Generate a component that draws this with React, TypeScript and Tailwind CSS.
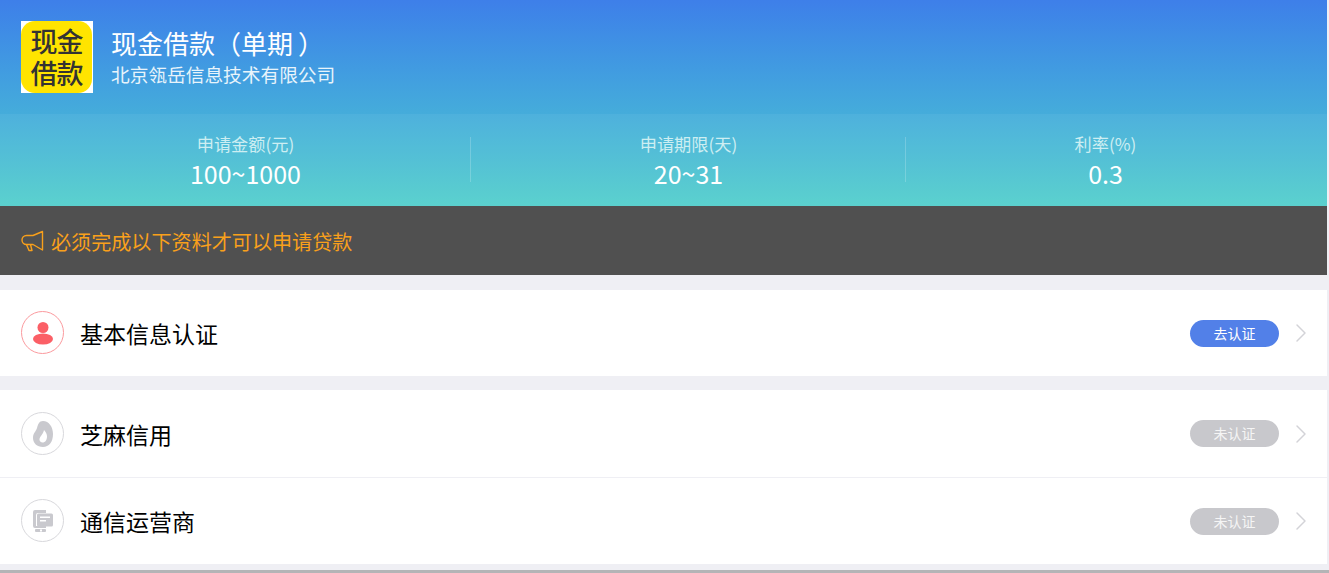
import { ChevronRight } from "lucide-react";

const font = { fontFamily: '"Noto Sans CJK SC", "Noto Sans", sans-serif' };

const stats = [
  { label: "申请金额(元)", value: "100~1000", pad: "pl-[20px]" },
  { label: "申请期限(天)", value: "20~31", pad: "" },
  { label: "利率(%)", value: "0.3", pad: "pr-[22px]" },
];

const UserIcon = () => (
  <svg width="22" height="24" viewBox="0 0 22 24">
    <circle cx="11" cy="6.500" r="5.500" fill="#fb5f66" />
    <ellipse cx="11" cy="18" rx="10" ry="5.500" fill="#fb5f66" />
  </svg>
);

const SesameIcon = () => (
  <svg width="22" height="28" viewBox="0 0 22 28">
    <path
      d="M11 1C17 1 21 7 21 14C21 22 17 27 11 27C5 27 1 23 1 18C1 13 4 11.500 5 8C6 4.500 7 1 11 1Z"
      fill="#c9c9ce"
    />
    <path d="M12 10C15 13 16 17 14 20.500C12 23.500 8 23 7.500 20C7 17 11 15 12 10Z" fill="#fff" />
  </svg>
);

const OperatorIcon = () => (
  <svg width="22" height="24" viewBox="0 0 22 24">
    <path d="M1 3a2 2 0 0 1 2-2h11v3H6a2 2 0 0 0-2 2v11h10v2H3a2 2 0 0 1-2-2Z" fill="#c9c9ce" />
    <rect x="5" y="4.500" width="16" height="13" rx="1.500" fill="#c9c9ce" />
    <rect x="8" y="7.500" width="10" height="1.500" fill="#fff" />
    <rect x="8" y="11" width="6" height="1.500" fill="#fff" />
    <rect x="3" y="20" width="11" height="3" rx="1" fill="#c9c9ce" />
    <rect x="8" y="20.500" width="2" height="2" fill="#fff" />
  </svg>
);

const MegaphoneIcon = () => (
  <svg width="23" height="22" viewBox="0 0 23 22" fill="none" stroke="#f9a01b" strokeWidth="1.400">
    <path d="M21.500 1.500V20L12 14.500H5.500a4.500 4.500 0 0 1 0-9H12Z" strokeLinejoin="round" />
    <path d="M5.500 14.500L8 20.500H11L9.500 14.500" strokeLinejoin="round" />
  </svg>
);

const Row = ({
  icon,
  title,
  badge,
  active,
  ringClass,
  className,
}: {
  icon: React.ReactNode;
  title: string;
  badge: string;
  active?: boolean;
  ringClass: string;
  className: string;
}) => (
  <div className={`flex items-center bg-white pl-[21px] pr-[10px] ${className}`}>
    <div className={`flex h-[43px] w-[43px] shrink-0 items-center justify-center rounded-full border ${ringClass}`}>
      {icon}
    </div>
    <div className="ml-[16px] flex-1 text-[23px] leading-[30px] text-black">{title}</div>
    <div
      className={`mt-[30px] flex h-[27px] w-[89px] items-center justify-center self-start rounded-full pb-[1px] text-[14px] ${
        active ? "bg-[#5280e8] text-white" : "bg-[#c8c8cc] text-[#f5f5f5]"
      }`}
    >
      {badge}
    </div>
    <ChevronRight className="ml-[6px] h-[32px] w-[32px] text-[#d3d3d8]" strokeWidth={1.100} />
  </div>
);

export default function App() {
  return (
    <div className="h-[573px] w-[1329px] overflow-hidden bg-[#efeff4]" style={font}>
      <div className="flex h-[570px] w-[1327px] flex-col">
        <div className="bg-gradient-to-b from-[#3e7fe9] to-[#52cecb]">
          <div className="flex h-[114px] items-start pl-[21px] pt-[21px]">
            <div className="h-[72px] w-[72px] shrink-0 bg-white">
              <div className="flex h-[72px] w-[71px] flex-col items-center justify-center rounded-[14px] bg-[#ffe400] text-[27px] font-medium leading-[32px] text-[#333]">
                <span className="tracking-[-1px]">现金</span>
                <span className="tracking-[-1px]">借款</span>
              </div>
            </div>
            <div className="ml-[18px] pt-[4px] text-white">
              <div className="text-[26px] leading-[36px]">
                现金借款（单期<span className="ml-[5px]">）</span>
              </div>
              <div className="text-[18.700px] leading-[26px] text-[#e8f4fb]">北京瓴岳信息技术有限公司</div>
            </div>
          </div>
          <div className="grid h-[92px] grid-cols-[471px_435px_1fr] bg-white/5 pt-[17px]">
            {stats.map((s, i) => (
              <div key={s.label} className={`relative h-[56px] ${s.pad}`}>
                <div className="flex flex-col items-center">
                  <div className="text-[17.200px] leading-[25px] text-[#cdeef2]">{s.label}</div>
                  <div className="text-[25px] leading-[34px] text-white">{s.value}</div>
                </div>
                {i < 2 && <div className="absolute right-0 top-[6px] h-[45px] w-px bg-white/20" />}
              </div>
            ))}
          </div>
        </div>

        <div className="flex h-[69px] items-center bg-[#505050] pl-[21px] text-[20.100px] text-[#f9a01b]">
          <MegaphoneIcon />
          <span className="ml-[7px] mt-[4px]">必须完成以下资料才可以申请贷款</span>
        </div>

        <Row
          className="mt-[15px] h-[86px] pb-[1px]"
          icon={<UserIcon />}
          title="基本信息认证"
          badge="去认证"
          active
          ringClass="border-[#fb9a9e]"
        />
        <Row
          className="mt-[14px] h-[88px] border-b border-[#efeff4]"
          icon={<SesameIcon />}
          title="芝麻信用"
          badge="未认证"
          ringClass="border-[#d8d8dc]"
        />
        <Row
          className="h-[86px] pb-[1px]"
          icon={<OperatorIcon />}
          title="通信运营商"
          badge="未认证"
          ringClass="border-[#d8d8dc]"
        />
      </div>
      <div className="h-[3px] bg-[#b4b4b6]" />
    </div>
  );
}
